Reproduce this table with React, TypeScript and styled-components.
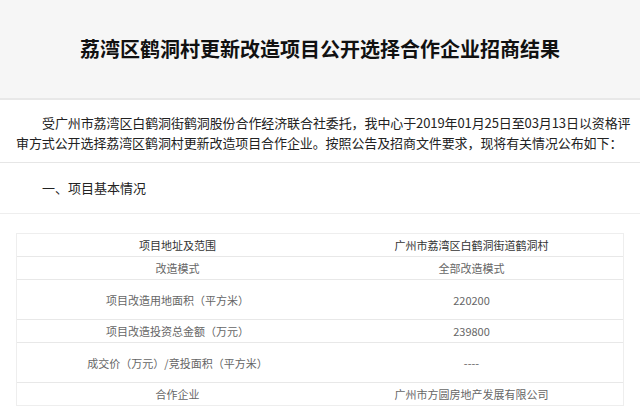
import React from "react";
import styled, { createGlobalStyle } from "styled-components";

const GlobalStyle = createGlobalStyle`
  html, body { margin: 0; padding: 0; background: #ffffff; }
  body { font-family: "Noto Sans CJK SC", "Liberation Sans", sans-serif; }
  * { box-sizing: border-box; }
`;

const Page = styled.div`
  width: 640px;
  display: flex;
  flex-direction: column;
`;

const Header = styled.header`
  height: 100px;
  background: #f6f6f6;
  border-bottom: 2px solid #e8e8e8;
  display: flex;
  align-items: center;
  justify-content: center;
`;

const Title = styled.h1`
  margin: 0;
  font-size: 20px;
  line-height: 24px;
  font-weight: 700;
  color: #111;
`;

const Intro = styled.p`
  margin: 0;
  padding: 13px 7px 9px 16px;
  font-size: 13px;
  line-height: 20px;
  letter-spacing: -0.1px;
  color: #222;
  text-indent: 2em;
  border-bottom: 1px solid #e6e6e6;
`;

const Section = styled.h2`
  margin: 0;
  padding: 15px 16px 15px;
  font-size: 13px;
  line-height: 20px;
  font-weight: 400;
  color: #222;
  text-indent: 2em;
  border-bottom: 1px solid #eeeeee;
`;

const TableWrap = styled.div`
  padding: 19px 16px 0;
`;

const Table = styled.div`
  border: 1px solid #eeeeee;
  display: flex;
  flex-direction: column;
`;

const Row = styled.div<{ $h: number }>`
  display: grid;
  grid-template-columns: 1fr 1fr;
  height: ${(p) => p.$h}px;
  & + & { border-top: 1px solid #e8e8e8; }
`;

const Cell = styled.div<{ $dark?: boolean; $lead?: boolean }>`
  display: flex;
  align-items: center;
  justify-content: center;
  padding-left: ${(p) => (p.$lead ? "18px" : "0")};
  font-size: 11px;
  color: ${(p) => (p.$dark ? "#333" : "#666")};
`;

const rows: { k: string; v: string; h: number; dark?: boolean }[] = [
  { k: "项目地址及范围", v: "广州市荔湾区白鹤洞街道鹤洞村", h: 22, dark: true },
  { k: "改造模式", v: "全部改造模式", h: 23 },
  { k: "项目改造用地面积（平方米）", v: "220200", h: 40 },
  { k: "项目改造投资总金额（万元）", v: "239800", h: 23 },
  { k: "成交价（万元）/竞投面积（平方米）", v: "----", h: 40 },
  { k: "合作企业", v: "广州市方圆房地产发展有限公司", h: 23 },
];

export default function App() {
  return (
    <Page>
      <GlobalStyle />
      <Header>
        <Title>荔湾区鹤洞村更新改造项目公开选择合作企业招商结果</Title>
      </Header>
      <Intro>
        受广州市荔湾区白鹤洞街鹤洞股份合作经济联合社委托，我中心于2019年01月25日至03月13日以资格评审方式公开选择荔湾区鹤洞村更新改造项目合作企业。按照公告及招商文件要求，现将有关情况公布如下：
      </Intro>
      <Section>一、项目基本情况</Section>
      <TableWrap>
        <Table>
          {rows.map((r) => (
            <Row key={r.k} $h={r.h}>
              <Cell $dark={r.dark} $lead>{r.k}</Cell>
              <Cell $dark={r.dark}>{r.v}</Cell>
            </Row>
          ))}
        </Table>
      </TableWrap>
    </Page>
  );
}
